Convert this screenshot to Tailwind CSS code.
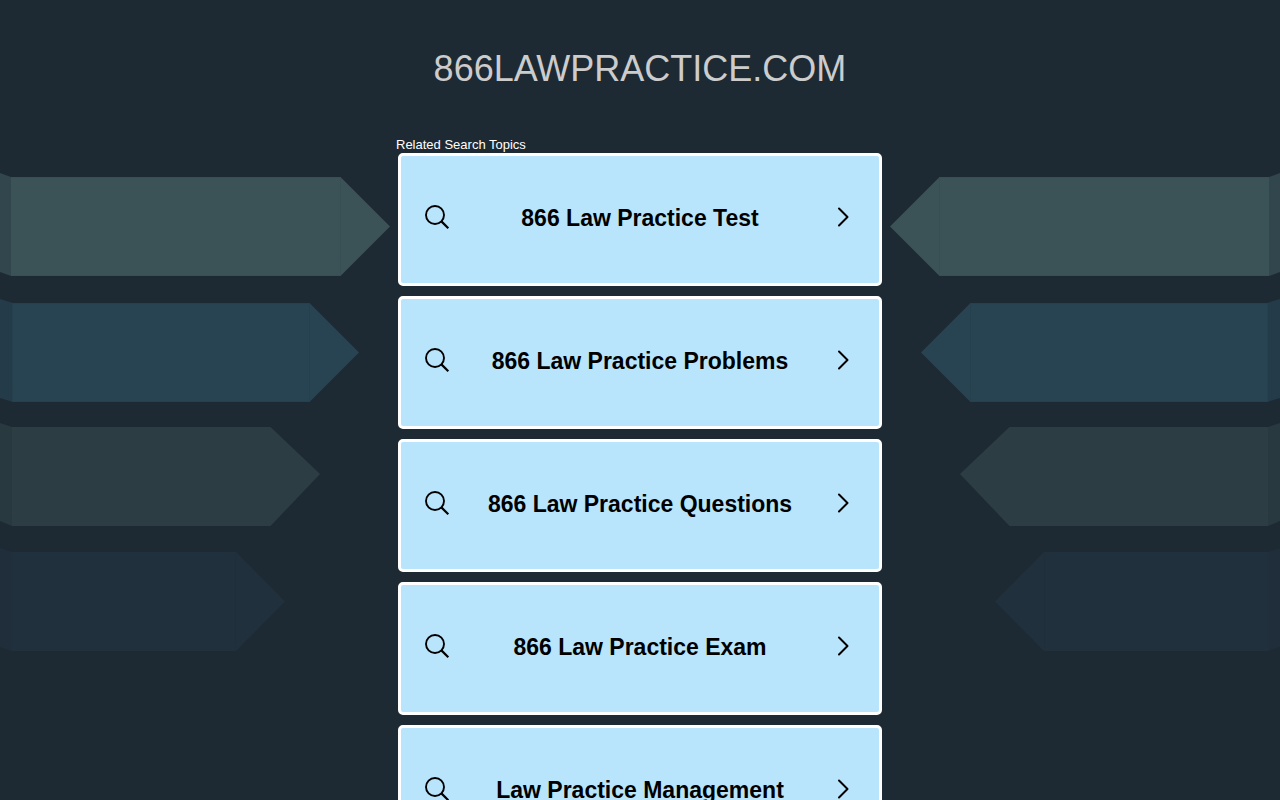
<!DOCTYPE html>
<html lang="en">
<head>
<meta charset="utf-8">
<meta name="viewport" content="width=device-width, initial-scale=1">
<title>866lawpractice.com</title>
<script src="https://cdn.jsdelivr.net/npm/@tailwindcss/browser@4"></script>
</head>
<body class="relative min-h-screen overflow-x-hidden bg-[#1e2a33] font-['Liberation_Sans',Arial,sans-serif]">
<svg class="hidden" aria-hidden="true">
  <symbol id="arrows" viewBox="0 0 400 500">
    <path fill="#32464d" d="M0 13 11 17V116L0 112Z"/>
    <path fill="#3b5357" d="M11 17H340.500L390 66.500 340.500 116H11Z"/>
    <path stroke="#385055" d="M340.500 17.500V115M11 115.500H340M11 17.500H340"/>
    <path fill="#243c49" d="M0 139 13 143V242L0 238Z"/>
    <path fill="#284452" d="M12.500 143H309.500L359 192.500 309.500 242H12.500Z"/>
    <path stroke="#26404e" d="M309.500 144V241M13 241.500H309M13 143.500H309"/>
    <path fill="#28393f" d="M0 263 12 267V366L0 361Z"/>
    <path fill="#2c3e44" d="M12 267H270.500L320 314 270.500 366H12Z"/>
    <path fill="#1f2e3a" d="M0 388 12 392V491L0 487Z"/>
    <path fill="#20313d" d="M12 392H236L285 441.500 236 491H12Z"/>
    <path stroke="#1f2e39" d="M235.500 393V490"/>
  </symbol>
  <symbol id="search" viewBox="0 0 26 26">
    <g fill="none" stroke="#000" stroke-width="1.900"><circle cx="11" cy="11" r="9"/><path d="M17.400 17.400 24.300 24.300" stroke-width="2.200"/></g>
  </symbol>
  <symbol id="chevron" viewBox="-7 0 26 20">
    <path d="M2 1.500 10.500 10 2 18.500" fill="none" stroke="#000" stroke-width="2" stroke-linecap="round" stroke-linejoin="round"/>
  </symbol>
</svg>
<div class="pointer-events-none absolute inset-x-0 top-40 flex justify-between" aria-hidden="true">
  <svg class="h-[500px] w-[400px] shrink-0"><use href="#arrows"/></svg>
  <svg class="h-[500px] w-[400px] shrink-0 -scale-x-100"><use href="#arrows"/></svg>
</div>
<header class="relative pt-[49px] text-center">
  <h1 class="text-[36px] leading-10 text-[#cccccc]">866LAWPRACTICE.COM</h1>
</header>
<main class="relative mx-auto mt-12 w-full max-w-[488px] pb-10">
  <h2 class="text-[13px] leading-4 text-white">Related Search Topics</h2>
  <nav class="flex flex-col gap-[10px] px-[2px]" aria-label="Related Search Topics">
    <a href="#" class="flex h-[133px] items-center rounded-[5px] border-[3px] border-white bg-[#b8e5fc] px-[23px] text-[23px] font-bold text-black"><svg class="mb-1.5 h-[26px] w-[26px] shrink-0"><use href="#search"/></svg><span class="flex-1 pb-0.5 text-center">866 Law Practice Test</span><svg class="mb-1.5 h-5 w-[26px] shrink-0"><use href="#chevron"/></svg></a>
    <a href="#" class="flex h-[133px] items-center rounded-[5px] border-[3px] border-white bg-[#b8e5fc] px-[23px] text-[23px] font-bold text-black"><svg class="mb-1.5 h-[26px] w-[26px] shrink-0"><use href="#search"/></svg><span class="flex-1 pb-0.5 text-center">866 Law Practice Problems</span><svg class="mb-1.5 h-5 w-[26px] shrink-0"><use href="#chevron"/></svg></a>
    <a href="#" class="flex h-[133px] items-center rounded-[5px] border-[3px] border-white bg-[#b8e5fc] px-[23px] text-[23px] font-bold text-black"><svg class="mb-1.5 h-[26px] w-[26px] shrink-0"><use href="#search"/></svg><span class="flex-1 pb-0.5 text-center">866 Law Practice Questions</span><svg class="mb-1.5 h-5 w-[26px] shrink-0"><use href="#chevron"/></svg></a>
    <a href="#" class="flex h-[133px] items-center rounded-[5px] border-[3px] border-white bg-[#b8e5fc] px-[23px] text-[23px] font-bold text-black"><svg class="mb-1.5 h-[26px] w-[26px] shrink-0"><use href="#search"/></svg><span class="flex-1 pb-0.5 text-center">866 Law Practice Exam</span><svg class="mb-1.5 h-5 w-[26px] shrink-0"><use href="#chevron"/></svg></a>
    <a href="#" class="flex h-[133px] items-center rounded-[5px] border-[3px] border-white bg-[#b8e5fc] px-[23px] text-[23px] font-bold text-black"><svg class="mb-1.5 h-[26px] w-[26px] shrink-0"><use href="#search"/></svg><span class="flex-1 pb-0.5 text-center">Law Practice Management</span><svg class="mb-1.5 h-5 w-[26px] shrink-0"><use href="#chevron"/></svg></a>
  </nav>
</main>
</body>
</html>
